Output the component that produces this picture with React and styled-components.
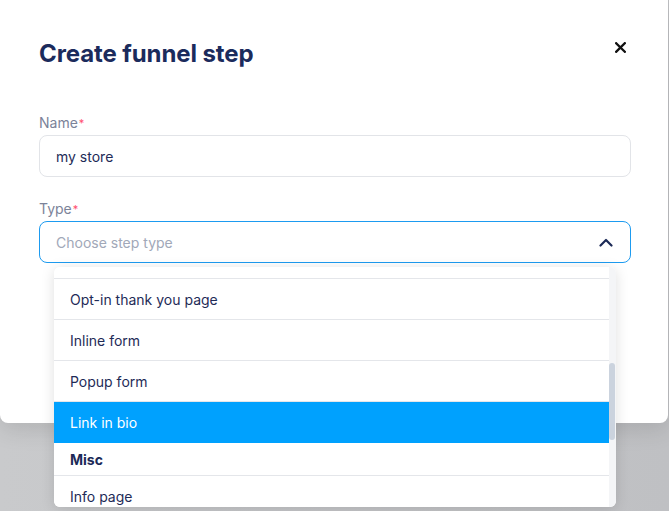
import React, { useEffect, useRef } from "react";
import styled, { createGlobalStyle } from "styled-components";

const GlobalStyle = createGlobalStyle`
  html, body {
    margin: 0;
    padding: 0;
    background: #c2c3c6;
    font-family: Inter, "Noto Sans", sans-serif;
    overflow: hidden;
  }
`;

const groups = [
  { title: "Sales", items: ["Sales page", "Checkout page", "Upsell page", "Downsell page", "Order confirmation"] },
  { title: "Lead generation", items: ["Opt-in page", "Opt-in thank you page", "Inline form", "Popup form", "Link in bio"] },
  { title: "Misc", items: ["Info page", "Webinar registration", "Webinar page", "Blog page", "Membership page", "Custom page"] },
];

const App = () => {
  const listRef = useRef(null);

  useEffect(() => {
    if (listRef.current) listRef.current.scrollTop = 300;
  }, []);

  return (
    <Page>
      <GlobalStyle />
      <Modal>
        <Header>
          <Title>Create funnel step</Title>
          <Close aria-label="Close">
            <svg width="11" height="11" viewBox="0 0 11 11">
              <path d="M1.2 1.2 L9.8 9.8 M9.8 1.2 L1.2 9.8" stroke="#111" strokeWidth="2.3" strokeLinecap="square" />
            </svg>
          </Close>
        </Header>

        <Field>
          <Label>
            Name<Star>*</Star>
          </Label>
          <Input>my store</Input>
        </Field>

        <Field>
          <Label>
            Type<Star>*</Star>
          </Label>
          <SelectWrap>
            <Select>
              <Placeholder>Choose step type</Placeholder>
              <svg width="14" height="9" viewBox="0 0 14 9">
                <path d="M1.5 7.5 L7 2 L12.5 7.5" fill="none" stroke="#1c2a57" strokeWidth="2.2" strokeLinecap="round" strokeLinejoin="round" />
              </svg>
            </Select>
            <Dropdown>
              <List ref={listRef}>
                {groups.map((g) => (
                  <React.Fragment key={g.title}>
                    <GroupTitle>{g.title}</GroupTitle>
                    {g.items.map((item) => (
                      <Option key={item} active={item === "Link in bio"}>
                        {item}
                      </Option>
                    ))}
                  </React.Fragment>
                ))}
              </List>
              <Track>
                <Thumb />
              </Track>
            </Dropdown>
          </SelectWrap>
        </Field>
      </Modal>
    </Page>
  );
};

const Page = styled.div`
  width: 669px;
  height: 511px;
  background: linear-gradient(90deg, #c9cacc 0%, #bfc0c3 100%);
`;

const Modal = styled.div`
  width: 668px;
  box-sizing: border-box;
  padding: 38px 37px 160px 39px;
  background: #fff;
  border-radius: 0 0 8px 8px;
  box-shadow: 0 6px 24px rgba(0, 0, 0, 0.12);
`;

const Header = styled.div`
  display: flex;
  justify-content: space-between;
  align-items: flex-start;
  margin-bottom: 43px;
`;

const Title = styled.h1`
  margin: 0;
  font-size: 24px;
  line-height: 32px;
  font-weight: 700;
  color: #1b2b5c;
  letter-spacing: -0.1px;
`;

const Close = styled.button`
  border: none;
  background: none;
  padding: 0;
  margin: 4px 5px 0 0;
  width: 11px;
  height: 11px;
  display: flex;
  cursor: pointer;
`;

const Field = styled.div`
  display: flex;
  flex-direction: column;
  gap: 2px;
  & + & {
    margin-top: 22px;
  }
`;

const Label = styled.label`
  font-size: 14px;
  line-height: 20px;
  color: #7b8399;
`;

const Star = styled.span`
  color: #ff4f70;
  font-size: 11px;
  vertical-align: top;
  margin-left: 1px;
`;

const Input = styled.div`
  height: 42px;
  box-sizing: border-box;
  border: 1px solid #e2e4e8;
  border-radius: 8px;
  padding: 0 16px;
  display: flex;
  align-items: center;
  font-size: 14px;
  color: #1e2b57;
`;

const SelectWrap = styled.div`
  position: relative;
`;

const Select = styled.div`
  height: 42px;
  box-sizing: border-box;
  border: 1px solid #1d9bf0;
  border-radius: 8px;
  padding: 0 17px 0 16px;
  display: flex;
  align-items: center;
  justify-content: space-between;
`;

const Placeholder = styled.span`
  font-size: 14px;
  color: #a1a8b8;
`;

const Dropdown = styled.div`
  position: absolute;
  top: 46px;
  left: 15px;
  width: 562px;
  height: 240px;
  display: flex;
  background: #fff;
  border-radius: 6px;
  overflow: hidden;
  box-shadow: 0 2px 14px rgba(0, 0, 0, 0.13);
  z-index: 5;
`;

const List = styled.div`
  flex: 1;
  height: 100%;
  overflow-y: scroll;
  scrollbar-width: none;
  &::-webkit-scrollbar {
    display: none;
  }
`;

const Track = styled.div`
  width: 7px;
  height: 100%;
  background: #f4f5f7;
  display: flex;
  flex-direction: column;
`;

const Thumb = styled.div`
  margin-top: 96px;
  width: 6px;
  height: 77px;
  border-radius: 3px;
  background: #cbd3de;
`;

const GroupTitle = styled.div`
  height: 33px;
  box-sizing: border-box;
  padding: 1px 16px 0;
  display: flex;
  align-items: center;
  font-size: 14px;
  font-weight: 700;
  color: #1c2a57;
  border-bottom: 1px solid #e4e6ea;
`;

const Option = styled.div`
  height: 41px;
  box-sizing: border-box;
  padding: 1px 16px 0;
  display: flex;
  align-items: center;
  font-size: 14px;
  color: ${(p) => (p.active ? "#fff" : "#1e2b57")};
  background: ${(p) => (p.active ? "#00a1fe" : "#fff")};
  border-bottom: 1px solid ${(p) => (p.active ? "#00a1fe" : "#e4e6ea")};
`;

export default App;
